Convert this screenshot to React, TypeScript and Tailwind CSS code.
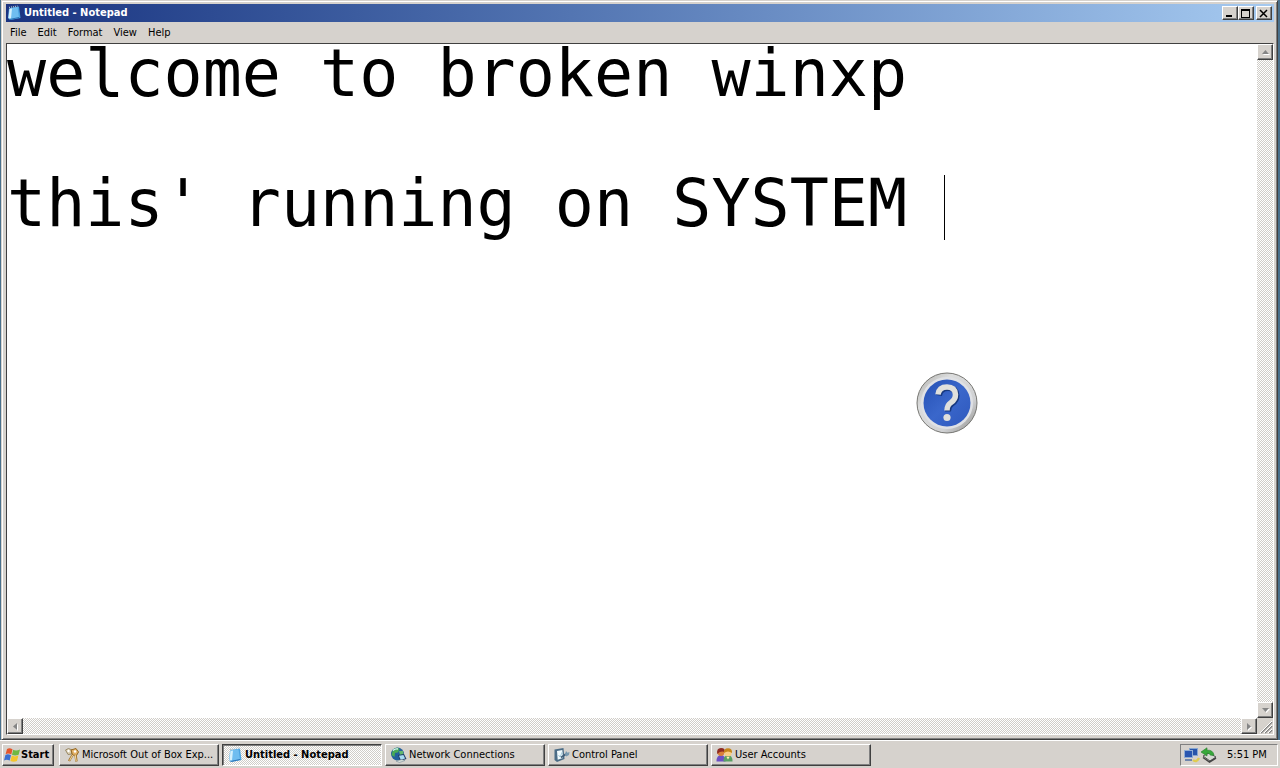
import type { ReactNode } from "react";

const RAISED =
  "border border-t-white border-l-white border-r-[#404040] border-b-[#404040] shadow-[inset_-1px_-1px_0_#808080] bg-[#d6d2cd]";
const DITHER =
  "bg-[#d6d2cd] bg-[repeating-conic-gradient(#ffffff_0%_25%,#d0cdc8_0%_50%)] bg-[length:2px_2px]";

const MENUS = ["File", "Edit", "Format", "View", "Help"];
const TEXT = "welcome to broken winxp\n\nthis' running on SYSTEM ";

function NotepadIcon() {
  return (
    <svg width="16" height="16" viewBox="0 0 16 16" className="shrink-0">
      <path d="M4 3 13 1.5 14.5 13 4.5 15Z" fill="#4aa3e0" />
      <path d="M3 3.5 11.5 2 13 12.5 3.5 14.5 2 13Z" fill="#6fbdf0" />
      <path d="M3.5 4 6 3.5 5 13.5 2.5 13Z" fill="#d5f0fc" />
      <path d="M3 2.5 11.5 1" stroke="#b8c4cc" strokeWidth="1.3" strokeDasharray="1 1" />
      <path d="M3.5 14.5 13 12.5" stroke="#2b74b8" />
    </svg>
  );
}

function WindowsIcon() {
  return (
    <svg width="17" height="16" viewBox="0 0 17 16" className="shrink-0">
      <path d="M3 2Q5.5 .5 8.5 2.3L7.3 7.5Q4.3 5.8 1.6 7.2Z" fill="#e5562c" />
      <path d="M9.2 2.7Q12 4.3 16 2.5L14.6 7.8Q11 9.4 8 7.8Z" fill="#6fb843" />
      <path d="M1.4 8Q4 6.6 7 8.3L5.7 13.6Q2.8 12 0 13.4Z" fill="#3b6fd0" />
      <path d="M7.8 8.6Q10.6 10.2 14.4 8.6L13 13.9Q9.5 15.5 6.4 13.9Z" fill="#f4c52c" />
    </svg>
  );
}

function KeysIcon() {
  return (
    <svg width="16" height="16" viewBox="0 0 16 16" className="shrink-0">
      <path d="M1.5 3 4.500 1.500 8 3 7.500 7 4 7.500Z" fill="#d9cdb0" stroke="#9a8a68" />
      <path d="M7 3 12 1.500 14.500 5 12.500 8.500 8.500 8Z" fill="#e3b268" stroke="#936722" />
      <path d="m8.5 8-3.5 6M11.5 8l1 6.5" stroke="#a8772f" strokeWidth="2.4" />
      <path d="m8.6 8-3 5.500M11.200 8l1 6" stroke="#f4dda4" />
      <circle cx="11" cy="4.5" r="1.2" fill="#fff" />
      <circle cx="4.5" cy="4" r="1.2" fill="#fff" />
    </svg>
  );
}

function GlobeIcon() {
  return (
    <svg width="17" height="16" viewBox="0 0 17 16" className="shrink-0">
      <circle cx="7.5" cy="7" r="6.5" fill="#235f9c" />
      <path d="M3 2.500Q7-.5 9.500 2L8 5.500 5 6 4.500 10 1.5 8Z" fill="#48a957" />
      <path d="M9 4 13 4 13.500 7.500 10 8Z" fill="#63b76d" />
      <path d="M3 3.500Q5 1.500 8 2" stroke="#d9f3ff" strokeWidth="1.4" fill="none" />
      <path d="m8 8 6-1 2.500 5-6.500 2Z" fill="#1f3a68" />
      <path d="m9 8.8 4.4-.7 1.7 3.3-4.400 1.300Z" fill="#a8dcf2" />
      <path d="m6 14 6-1.5 3 1-5.500 2Z" fill="#d9dfd9" stroke="#688090" strokeWidth=".5" />
    </svg>
  );
}

function PanelIcon() {
  return (
    <svg width="17" height="16" viewBox="0 0 17 16" className="shrink-0">
      <path d="M1.500 2.5 10.500 1 11.500 12 4 15 1.500 13Z" fill="#4b6c86" />
      <path d="M4 4 9.3 3 10 11 4.7 12.7Z" fill="#f0fafd" />
      <path d="m5.5 8 1.5 2 2.3-5" stroke="#a5cbdc" fill="none" />
      <path d="m8 10.500 5-3.5" stroke="#405e78" strokeWidth="2" />
      <path d="m12 7.500 1-3.500 1.5 1.800L16.500 5l-.500 3-2.8 1.500Z" fill="#7799b0" />
    </svg>
  );
}

function UsersIcon() {
  return (
    <svg width="17" height="16" viewBox="0 0 17 16" className="shrink-0">
      <path d="M.5 14.500Q.5 8 5 8t4.500 6.500Z" fill="#6c4fc4" />
      <circle cx="5" cy="5.5" r="3.4" fill="#d97f3a" />
      <path d="M1.2 7Q.3 1 5 1T8.5 5Q5 3.500 1.2 7Z" fill="#8f2a22" />
      <path d="M7.500 14.500Q7.500 8 12 8t4.500 6.500Z" fill="#58a062" />
      <circle cx="12" cy="6" r="3.6" fill="#f9cd84" />
      <path d="M8 6Q7.500 1.2 12 1.2T16 6Q12 2.8 8 6Z" fill="#c78618" />
      <path d="m10.500 10 1.500 2.500L13.500 10" fill="#fff0b0" />
    </svg>
  );
}

function NetworkTrayIcon() {
  return (
    <svg width="17" height="16" viewBox="0 0 17 16">
      <path d="M6 1h9v8H6Z" fill="#86a5d0" />
      <path d="M7 2h7v6H7Z" fill="#2855aa" />
      <path d="M1 3h9v8H1Z" fill="#91add3" />
      <path d="M2 4h7v6H2Z" fill="#2a57b0" />
      <path d="M2 12h7v2H2Z" fill="#6f86ad" />
      <path d="M10 13q3 3 6-2" stroke="#e0cc50" strokeWidth="2.4" fill="none" />
    </svg>
  );
}

function HardwareTrayIcon() {
  return (
    <svg width="17" height="16" viewBox="0 0 17 16">
      <path d="m3 9 6-3 7 4-6 4Z" fill="#d5d8d2" stroke="#555" />
      <path d="m3 10.500 6.500 4.500L16 11" stroke="#444" fill="none" strokeWidth="1.5" />
      <path d="M1 5 7 .8v2.400q6-.500 7 5H10.500Q9.500 6 7 6.200V9Z" fill="#38a83b" stroke="#227d28" strokeWidth=".6" />
    </svg>
  );
}

function HelpBadge() {
  return (
    <svg width="62" height="62" viewBox="0 0 62 62" aria-label="Help">
      <defs>
        <linearGradient id="rim" x1="0" y1="0" x2="1" y2="1">
          <stop offset="0" stopColor="#a9a9a6" />
          <stop offset=".3" stopColor="#dcdddd" />
          <stop offset=".7" stopColor="#d0d1d3" />
          <stop offset="1" stopColor="#858582" />
        </linearGradient>
        <linearGradient id="face" x1="0" y1="0" x2="1" y2="1">
          <stop offset="0" stopColor="#2450b4" />
          <stop offset=".5" stopColor="#3a67cb" />
          <stop offset="1" stopColor="#2e58bd" />
        </linearGradient>
      </defs>
      <circle cx="31" cy="31" r="30" fill="url(#rim)" stroke="#777773" />
      <circle cx="31" cy="31" r="26" fill="#dfe1e5" />
      <circle cx="31" cy="31" r="23.5" fill="url(#face)" />
      <path
        d="M22 22.5Q23 15 31 15T39.500 22.500Q39.500 27.500 35 30.500 31 33 31 38.500"
        stroke="#17387f"
        strokeWidth="6"
        fill="none"
        transform="translate(1 1)"
      />
      <path
        d="M22 22.5Q23 15 31 15T39.500 22.500Q39.500 27.500 35 30.500 31 33 31 38.500"
        stroke="#e0e0dc"
        strokeWidth="5.5"
        fill="none"
      />
      <circle cx="31" cy="45.500" r="3.600" fill="#e0e0dc" />
    </svg>
  );
}

function CaptionButton({ label, children }: { label: string; children: ReactNode }) {
  return (
    <button aria-label={label} className={`flex h-[14px] w-4 items-center justify-center ${RAISED}`}>
      <svg width="12" height="11" viewBox="0 0 12 11" fill="none" stroke="#000" shapeRendering="crispEdges">
        {children}
      </svg>
    </button>
  );
}

function ScrollButton({ label, d }: { label: string; d: string }) {
  return (
    <button aria-label={label} className={`flex size-4 shrink-0 items-center justify-center ${RAISED}`}>
      <svg width="9" height="9" viewBox="0 0 9 9">
        <path d={d} fill="#fff" transform="translate(1 1)" />
        <path d={d} fill="#858585" />
      </svg>
    </button>
  );
}

function TitleBar() {
  return (
    <header className="flex h-[18px] shrink-0 items-center bg-linear-to-r from-[#1a3380] to-[#a6caf0] pr-[2px]">
      <NotepadIcon />
      <h1 className="ml-[2px] flex-1 font-bold text-white">Untitled - Notepad</h1>
      <CaptionButton label="Minimize">
        <path d="M2 8h6" strokeWidth="2" />
      </CaptionButton>
      <CaptionButton label="Maximize">
        <path d="M1.5 1v8M9.5 1v8M1 9.5h9" />
        <path d="M1 2h9" strokeWidth="2" />
      </CaptionButton>
      <div className="w-[2px]" />
      <CaptionButton label="Close">
        <path d="m2 2 7 7M9 2 2 9" strokeWidth="1.5" shapeRendering="auto" />
      </CaptionButton>
    </header>
  );
}

function Editor() {
  return (
    <main className="flex min-h-0 flex-1 flex-col border border-t-[#404040] border-l-[#404040] border-r-white border-b-white">
      <div className="flex min-h-0 flex-1 bg-white">
        <div className="relative min-w-0 flex-1">
          <textarea
            aria-label="Document text"
            defaultValue={TEXT}
            spellCheck={false}
            wrap="off"
            className="-mt-[3px] block size-full resize-none overflow-hidden bg-transparent font-['DejaVu_Sans_Mono',monospace] text-[65px] leading-[65px] text-black outline-none"
          />
          <div className="absolute top-[131px] left-[937px] h-[65px] w-px bg-black" />
          <div className="absolute top-[328px] left-[909px]">
            <HelpBadge />
          </div>
        </div>
        <div className={`flex flex-col justify-between ${DITHER}`}>
          <ScrollButton label="Scroll up" d="M4.5 2 8 6H1Z" />
          <ScrollButton label="Scroll down" d="M4.5 6 8 2H1Z" />
        </div>
      </div>
      <div className="flex">
        <div className={`flex flex-1 justify-between ${DITHER}`}>
          <ScrollButton label="Scroll left" d="M2 4.5 6 1v7Z" />
          <ScrollButton label="Scroll right" d="M6 4.5 2 1v7Z" />
        </div>
        <svg width="16" height="16" viewBox="0 0 16 16" className="bg-[#d6d2cd]">
          <path d="M4 15 15 4M8 15l7-7M12 15l3-3" stroke="#808080" strokeWidth="1.5" />
          <path d="M3 15 15 3M7 15l8-8M11 15l4-4" stroke="#fff" />
        </svg>
      </div>
    </main>
  );
}

const TASKS = [
  { label: "Microsoft Out of Box Exp...", icon: <KeysIcon /> },
  { label: "Untitled - Notepad", icon: <NotepadIcon />, active: true },
  { label: "Network Connections", icon: <GlobeIcon /> },
  { label: "Control Panel", icon: <PanelIcon /> },
  { label: "User Accounts", icon: <UsersIcon /> },
];

function Taskbar() {
  return (
    <footer className="flex h-[28px] shrink-0 items-center border-t border-white bg-[#d6d2cd] px-[2px]">
      <button className={`flex h-[22px] w-[52px] items-center pl-px font-bold ${RAISED}`}>
        <WindowsIcon />
        Start
      </button>
      <nav className="ml-[5px] flex min-w-0 flex-1 gap-[3px]">
        {TASKS.map(({ label, icon, active }) => (
          <button
            key={label}
            className={`flex h-[22px] w-40 items-center gap-[2px] pl-1 text-left whitespace-nowrap ${
              active
                ? `border border-t-[#404040] border-l-[#404040] border-r-white border-b-white pt-px font-bold shadow-[inset_1px_1px_0_#808080] ${DITHER}`
                : RAISED
            }`}
          >
            {icon}
            {label}
          </button>
        ))}
      </nav>
      <div className="flex h-[22px] w-[98px] items-center border border-t-[#808080] border-l-[#808080] border-r-white border-b-white pl-[2px]">
        <NetworkTrayIcon />
        <HardwareTrayIcon />
        <time className="ml-[10px]">5:51 PM</time>
      </div>
    </footer>
  );
}

export default function App() {
  return (
    <div className="flex h-screen flex-col overflow-hidden bg-[#49708c] font-['DejaVu_Sans_Condensed','DejaVu_Sans',sans-serif] text-[11px] leading-[14px] text-black">
      <div className="mr-[2px] ml-px flex min-h-0 flex-1 flex-col border border-t-[#d6d2cd] border-l-[#d6d2cd] border-r-[#404040] border-b-[#404040] bg-[#d6d2cd] pt-[3px] pr-[3px] pb-1 pl-1 shadow-[inset_1px_1px_0_#fff,inset_-1px_-1px_0_#808080]">
        <TitleBar />
        <nav className="flex h-[21px] shrink-0 items-center gap-[11px] pl-1">
          {MENUS.map((menu) => (
            <button key={menu}>{menu}</button>
          ))}
        </nav>
        <Editor />
      </div>
      <Taskbar />
    </div>
  );
}
